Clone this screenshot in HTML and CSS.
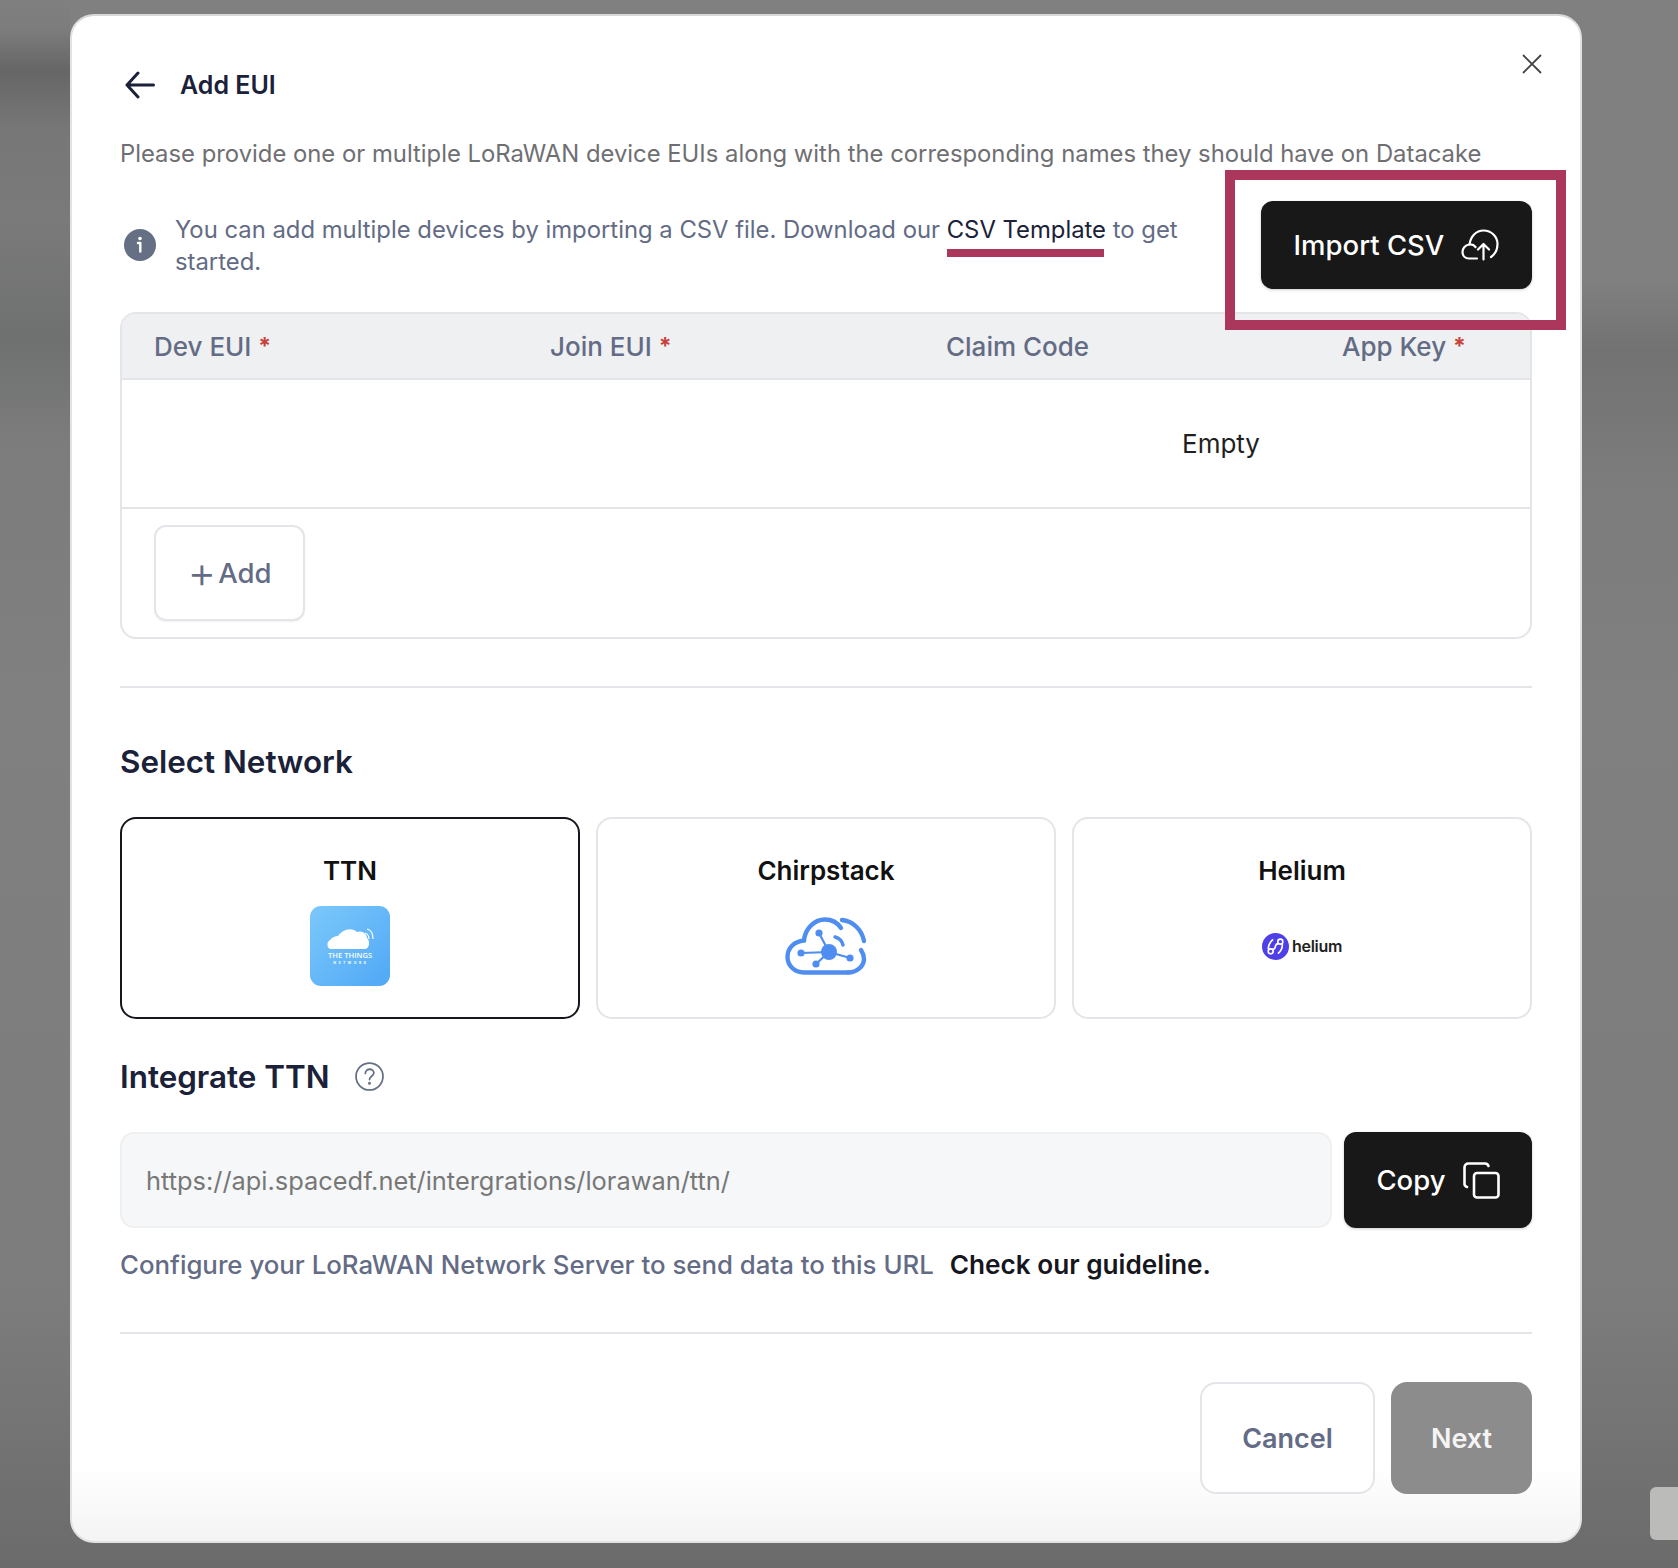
FILE: index.html
```html
<!DOCTYPE html>
<html lang="en">
<head>
    <meta charset="UTF-8">
    <title>Add EUI</title>
    <link rel="stylesheet" href="styles.css">
</head>
<body>
    <div class="side-tab"></div>
    <div class="modal">
        <svg class="close-icon" viewBox="0 0 20 20" fill="none" stroke="#444" stroke-width="1.8"><path d="M1 1L19 19M19 1L1 19"/></svg>

        <div class="modal-head">
            <svg class="back-icon" viewBox="0 0 30 28" fill="none" stroke="#1a2138" stroke-width="3" stroke-linecap="round" stroke-linejoin="round"><path d="M13 2L2 14L13 26M2 14H28.5"/></svg>
            <h2>Add EUI</h2>
        </div>
        <p class="desc">Please provide one or multiple LoRaWAN device EUIs along with the corresponding names they should have on Datacake</p>

        <div class="info-row">
            <svg class="info-icon" viewBox="0 0 32 32"><circle cx="16" cy="16" r="16" fill="#667085"/><circle cx="16" cy="9.5" r="1.8" fill="#fff"/><path d="M14 14H16.3V22.5" fill="none" stroke="#fff" stroke-width="2.4" stroke-linecap="round" stroke-linejoin="round"/></svg>
            <p class="info-text">You can add multiple devices by importing a CSV file. Download our <a href="#" class="csv-link">CSV Template</a> to get started.</p>
            <button class="btn-dark btn-import">
                Import CSV
                <svg class="cloud-icon" viewBox="0 0 38 32" fill="none" stroke="#fff" stroke-width="2.2" stroke-linecap="round" stroke-linejoin="round"><path d="M16 29.5H8C4 29.5 1.5 26.5 1.5 23C1.5 19 4.5 16 8 15.5C11 15 13 16 14.5 18"/><path d="M8.5 15.5C9.5 7.5 15 1.5 22.5 1.5C30.5 1.5 36.5 7.5 36.5 15C36.5 21 33.5 25.5 30 28"/><path d="M22.5 30.5V15M17 20.5L22.5 15L28 20.5"/></svg>
            </button>
        </div>
        <div class="highlight-box"></div>

        <div class="eui-table">
            <div class="eui-head">
                <span>Dev EUI <b>*</b></span>
                <span>Join EUI <b>*</b></span>
                <span>Claim Code</span>
                <span>App Key <b>*</b></span>
            </div>
            <div class="eui-empty">Empty</div>
            <div class="eui-foot">
                <button class="btn-add"><span class="plus">+</span>Add</button>
            </div>
        </div>

        <hr class="divider divider-top">

        <h3 class="section-title title-network">Select Network</h3>
        <div class="network-grid">
            <div class="network-card active">
                <span>TTN</span>
                <div class="logo-box">
                    <svg class="ttn-logo" viewBox="0 0 80 80">
                        <defs><linearGradient id="ttnBg" x1="0" y1="0" x2="1" y2="1"><stop offset="0" stop-color="#7bc8fb"/><stop offset="1" stop-color="#50a8f5"/></linearGradient></defs>
                        <rect width="80" height="80" rx="11" fill="url(#ttnBg)"/>
                        <path d="M21 43C17 43 16 36 20 34C23 31 25 30 28 30C31 25 41 20 47 26C52 24 57 28 57 32C60 34 60 43 55 43Z" fill="#fff"/>
                        <path d="M55 27C58 28 59 31 59 33M57 23C61 24 63 28 63 33" fill="none" stroke="#fff" stroke-width="1.2"/>
                        <text x="40" y="52" text-anchor="middle" class="ttn-top">THE THINGS</text>
                        <text x="41" y="57.5" text-anchor="middle" class="ttn-bottom">NETWORK</text>
                    </svg>
                </div>
            </div>
            <div class="network-card">
                <span>Chirpstack</span>
                <div class="logo-box">
                    <svg class="chirp-logo" viewBox="0 0 82 58" fill="none" stroke="#4f8ef0" stroke-width="4.4" stroke-linecap="round">
                        <path d="M63 55.5H19C9 55.5 2.5 48 2.5 40C2.5 31 9 24.5 19 23.5C20 11 30 2.5 40 2.5C47 2.5 52 5 56 11"/>
                        <path d="M63 55.5C72 55.5 79 49 79 42C79 39 78 36 76 33"/>
                        <path d="M57 3C68 4 77 13 79 24"/>
                        <path d="M50 20C54 21 57 24 58 28" stroke-width="3.4"/>
                        <path d="M34 16L44 35L16 36M44 35L31 47M44 35L65 41" stroke-width="2.2"/>
                        <g fill="#4f8ef0" stroke="none">
                            <circle cx="44" cy="35" r="8"/>
                            <circle cx="34" cy="16" r="3.6"/>
                            <circle cx="16" cy="36" r="3.6"/>
                            <circle cx="31" cy="47" r="3.6"/>
                            <circle cx="65" cy="41" r="3.6"/>
                        </g>
                    </svg>
                </div>
            </div>
            <div class="network-card">
                <span>Helium</span>
                <div class="logo-box">
                    <div class="helium-logo">
                        <svg class="helium-mark" viewBox="0 0 28 28" fill="none" stroke="#fff" stroke-width="1.7">
                            <circle cx="14" cy="14" r="14" fill="#4f3fe6" stroke="none"/>
                            <circle cx="9" cy="19" r="2.6"/>
                            <circle cx="19" cy="9" r="2.6"/>
                            <path d="M11 17C16 16.5 11.5 11.5 17 11M16.5 21.5C20 18.5 21.5 16 21 11.5M6.5 16.5C6.5 12 8 9.5 11.5 6.5"/>
                        </svg>
                        <span class="helium-word">helium</span>
                    </div>
                </div>
            </div>
        </div>

        <div class="integrate-head">
            <h3 class="section-title">Integrate TTN</h3>
            <svg class="help-icon" viewBox="0 0 28 28" fill="none" stroke="#667085" stroke-width="1.7" stroke-linecap="round"><circle cx="14" cy="14" r="13"/><path d="M10 11C10 8.5 12 7 14.2 7C16.5 7 18.2 8.6 18.2 10.6C18.2 13.5 14 13.6 14 17"/><circle cx="14" cy="20.5" r="0.6" fill="#667085"/></svg>
        </div>
        <div class="url-row">
            <div class="url-input">https://api.spacedf.net/intergrations/lorawan/ttn/</div>
            <button class="btn-dark btn-copy">
                Copy
                <svg class="copy-icon" viewBox="0 0 37 37" fill="none" stroke="#fff" stroke-width="2.6" stroke-linecap="round" stroke-linejoin="round"><rect x="11" y="11" width="24.5" height="24.5" rx="3"/><path d="M4 25C2.5 24.5 1.5 23.5 1.5 22V5.5C1.5 3 3 1.5 5.5 1.5H22C24 1.5 25 2.5 25.5 4"/></svg>
            </button>
        </div>
        <p class="url-note">Configure your LoRaWAN Network Server to send data to this URL <a href="#" class="guide-link">Check our guideline.</a></p>

        <hr class="divider divider-bottom">

        <div class="modal-actions">
            <button class="btn-cancel">Cancel</button>
            <button class="btn-next">Next</button>
        </div>
    </div>
</body>
</html>
```

FILE: styles.css
```css
* {
    box-sizing: border-box;
}
html, body {
    margin: 0;
    height: 1568px;
    overflow: hidden;
}
body {
    position: relative;
    padding: 14px 0 0 70px;
    font-family: Inter, "Liberation Sans", sans-serif;
    background-color: #808080;
    background-image:
        linear-gradient(180deg, #808080 0, #7c7c7c 30px, #666 70px, #777 130px, #7a7a7a 220px, #6f7070 340px, #7c7c7c 440px, #808080 700px, #7c7c7c 1300px, #6b6b6b 1568px),
        linear-gradient(180deg, #808080 0, #808080 280px, #727272 350px, #7c7c7c 480px, #808080 700px, #7c7c7c 1300px, #6b6b6b 1568px);
    background-size: 70px 100%, 100% 100%;
    background-repeat: no-repeat;
}
button {
    font-family: inherit;
    cursor: pointer;
}
h2, h3, p {
    margin: 0;
}
.side-tab {
    position: absolute;
    left: 1650px;
    top: 1487px;
    width: 40px;
    height: 53px;
    background-color: #bbbbb9;
    border-radius: 6px;
}
.modal {
    position: relative;
    width: 1512px;
    height: 1529px;
    padding: 49px 48px 0 48px;
    background: linear-gradient(180deg, #fff 1450px, #f4f4f4 100%);
    border: 2px solid #e2e2e2;
    border-top-color: #d8d8d8;
    border-radius: 24px;
}
.close-icon {
    position: absolute;
    top: 38px;
    left: 1450px;
    width: 20px;
    height: 20px;
}
.modal-head {
    display: flex;
    align-items: center;
    height: 40px;
    padding-left: 5px;
}
.back-icon {
    width: 30px;
    height: 28px;
    margin-right: 25px;
}
.modal-head h2 {
    font-size: 25px;
    font-weight: 600;
    color: #1a2138;
}
.desc {
    margin-top: 33px;
    font-size: 23.83px;
    line-height: 32px;
    color: #6f6f73;
    white-space: nowrap;
}
.info-row {
    display: flex;
    align-items: center;
    margin-top: 31px;
    padding-left: 4px;
}
.info-icon {
    flex: none;
    width: 32px;
    height: 32px;
    margin-right: 19px;
}
.info-text {
    width: 1085px;
    padding-top: 2px;
    font-size: 23.83px;
    line-height: 32px;
    color: #636b85;
}
.csv-link {
    position: relative;
    color: #1a2138;
    text-decoration: none;
}
.csv-link::after {
    content: "";
    position: absolute;
    left: 0;
    right: 2px;
    bottom: -13px;
    height: 8px;
    background-color: #ab375c;
}
.btn-dark {
    display: flex;
    align-items: center;
    justify-content: center;
    border: none;
    background-color: #181818;
    color: #fff;
    font-size: 27.5px;
    font-weight: 500;
    border-radius: 12px;
    box-shadow: 0 1px 3px rgba(0, 0, 0, 0.2);
}
.btn-import {
    width: 271px;
    height: 88px;
    margin-left: auto;
    gap: 17px;
}
.cloud-icon {
    width: 38px;
    height: 32px;
}
.highlight-box {
    position: absolute;
    left: 1153px;
    top: 154px;
    width: 341px;
    height: 160px;
    border: 10px solid #ab375c;
    z-index: 2;
}
.eui-table {
    margin-top: 23px;
    height: 327px;
    border: 2px solid #e4e5e9;
    border-radius: 16px;
    overflow: hidden;
}
.eui-head {
    display: grid;
    grid-template-columns: repeat(4, 396px);
    align-items: center;
    height: 66px;
    padding-left: 32px;
    background-color: #eff0f2;
    border-bottom: 2px solid #e4e5e9;
    font-size: 26px;
    font-weight: 500;
    color: #636b85;
    white-space: nowrap;
}
.eui-head b {
    color: #c9403a;
    font-size: 23px;
    font-weight: 700;
    vertical-align: 2px;
}
.eui-empty {
    height: 129px;
    padding: 48px 0 0 1060px;
    border-bottom: 2px solid #e4e5e9;
    font-size: 26px;
    line-height: 32px;
    color: #1f1f1f;
}
.eui-foot {
    padding: 16px 32px;
}
.btn-add {
    display: flex;
    align-items: center;
    justify-content: center;
    width: 151px;
    height: 96px;
    background-color: #fff;
    border: 2px solid #e4e5e9;
    border-radius: 12px;
    box-shadow: 0 1px 2px rgba(0, 0, 0, 0.06);
    font-size: 27.5px;
    font-weight: 500;
    color: #636b85;
}
.plus {
    font-size: 44px;
    font-weight: 300;
    line-height: 30px;
    margin: -3px 2px 0 0;
}
.divider {
    height: 2px;
    margin: 0;
    border: none;
    background-color: #e4e5e9;
}
.divider-top {
    margin-top: 47px;
}
.section-title {
    font-size: 31.4px;
    line-height: 40px;
    font-weight: 600;
    color: #1a2138;
}
.title-network {
    margin-top: 54px;
}
.network-grid {
    display: grid;
    grid-template-columns: repeat(3, 460px);
    gap: 16px;
    margin-top: 35px;
}
.network-card {
    display: flex;
    flex-direction: column;
    align-items: center;
    height: 202px;
    padding-top: 34px;
    background-color: #fff;
    border: 2px solid #e4e5e9;
    border-radius: 16px;
    font-size: 26px;
    line-height: 36px;
    font-weight: 600;
    color: #111;
}
.network-card.active {
    border-color: #16161e;
}
.logo-box {
    display: flex;
    align-items: center;
    justify-content: center;
    width: 80px;
    height: 80px;
    margin-top: 17px;
}
.ttn-logo {
    width: 80px;
    height: 80px;
}
.ttn-top {
    font-family: "Open Sans", sans-serif;
    font-size: 7.6px;
    font-weight: 600;
    fill: #fff;
}
.ttn-bottom {
    font-family: "Open Sans", sans-serif;
    font-size: 3.4px;
    font-weight: 700;
    letter-spacing: 2.6px;
    fill: #fff;
}
.chirp-logo {
    flex: none;
    width: 82px;
    height: 58px;
}
.helium-logo {
    display: flex;
    align-items: center;
    flex: none;
    gap: 3px;
}
.helium-mark {
    width: 27px;
    height: 27px;
}
.helium-word {
    font-size: 16px;
    line-height: 20px;
    font-weight: 600;
    color: #222;
    letter-spacing: -0.3px;
}
.integrate-head {
    display: flex;
    align-items: center;
    gap: 25px;
    margin-top: 38px;
}
.help-icon {
    width: 29px;
    height: 29px;
    margin-top: -2px;
}
.url-row {
    display: flex;
    gap: 12px;
    margin-top: 35px;
}
.url-input {
    flex: 1;
    height: 96px;
    padding: 0 24px;
    background-color: #f6f7f9;
    border: 2px solid #eff0f2;
    border-radius: 14px;
    font-size: 25.4px;
    line-height: 94px;
    color: #777;
}
.btn-copy {
    flex: none;
    width: 188px;
    height: 96px;
    gap: 17px;
}
.copy-icon {
    width: 37px;
    height: 37px;
}
.url-note {
    margin-top: 21px;
    font-size: 25.8px;
    line-height: 32px;
    font-weight: 500;
    color: #636b85;
}
.guide-link {
    margin-left: 9px;
    color: #16161e;
    font-size: 26.2px;
    font-weight: 600;
    text-decoration: none;
}
.divider-bottom {
    margin-top: 51px;
}
.modal-actions {
    display: flex;
    justify-content: flex-end;
    gap: 16px;
    margin-top: 48px;
}
.btn-cancel, .btn-next {
    height: 112px;
    border-radius: 16px;
    font-size: 27px;
    font-weight: 600;
}
.btn-cancel {
    width: 175px;
    background-color: #fff;
    border: 2px solid #e4e5e9;
    color: #636b85;
}
.btn-next {
    width: 141px;
    background-color: #8c8c8c;
    border: none;
    color: #f4f4f4;
}
```
